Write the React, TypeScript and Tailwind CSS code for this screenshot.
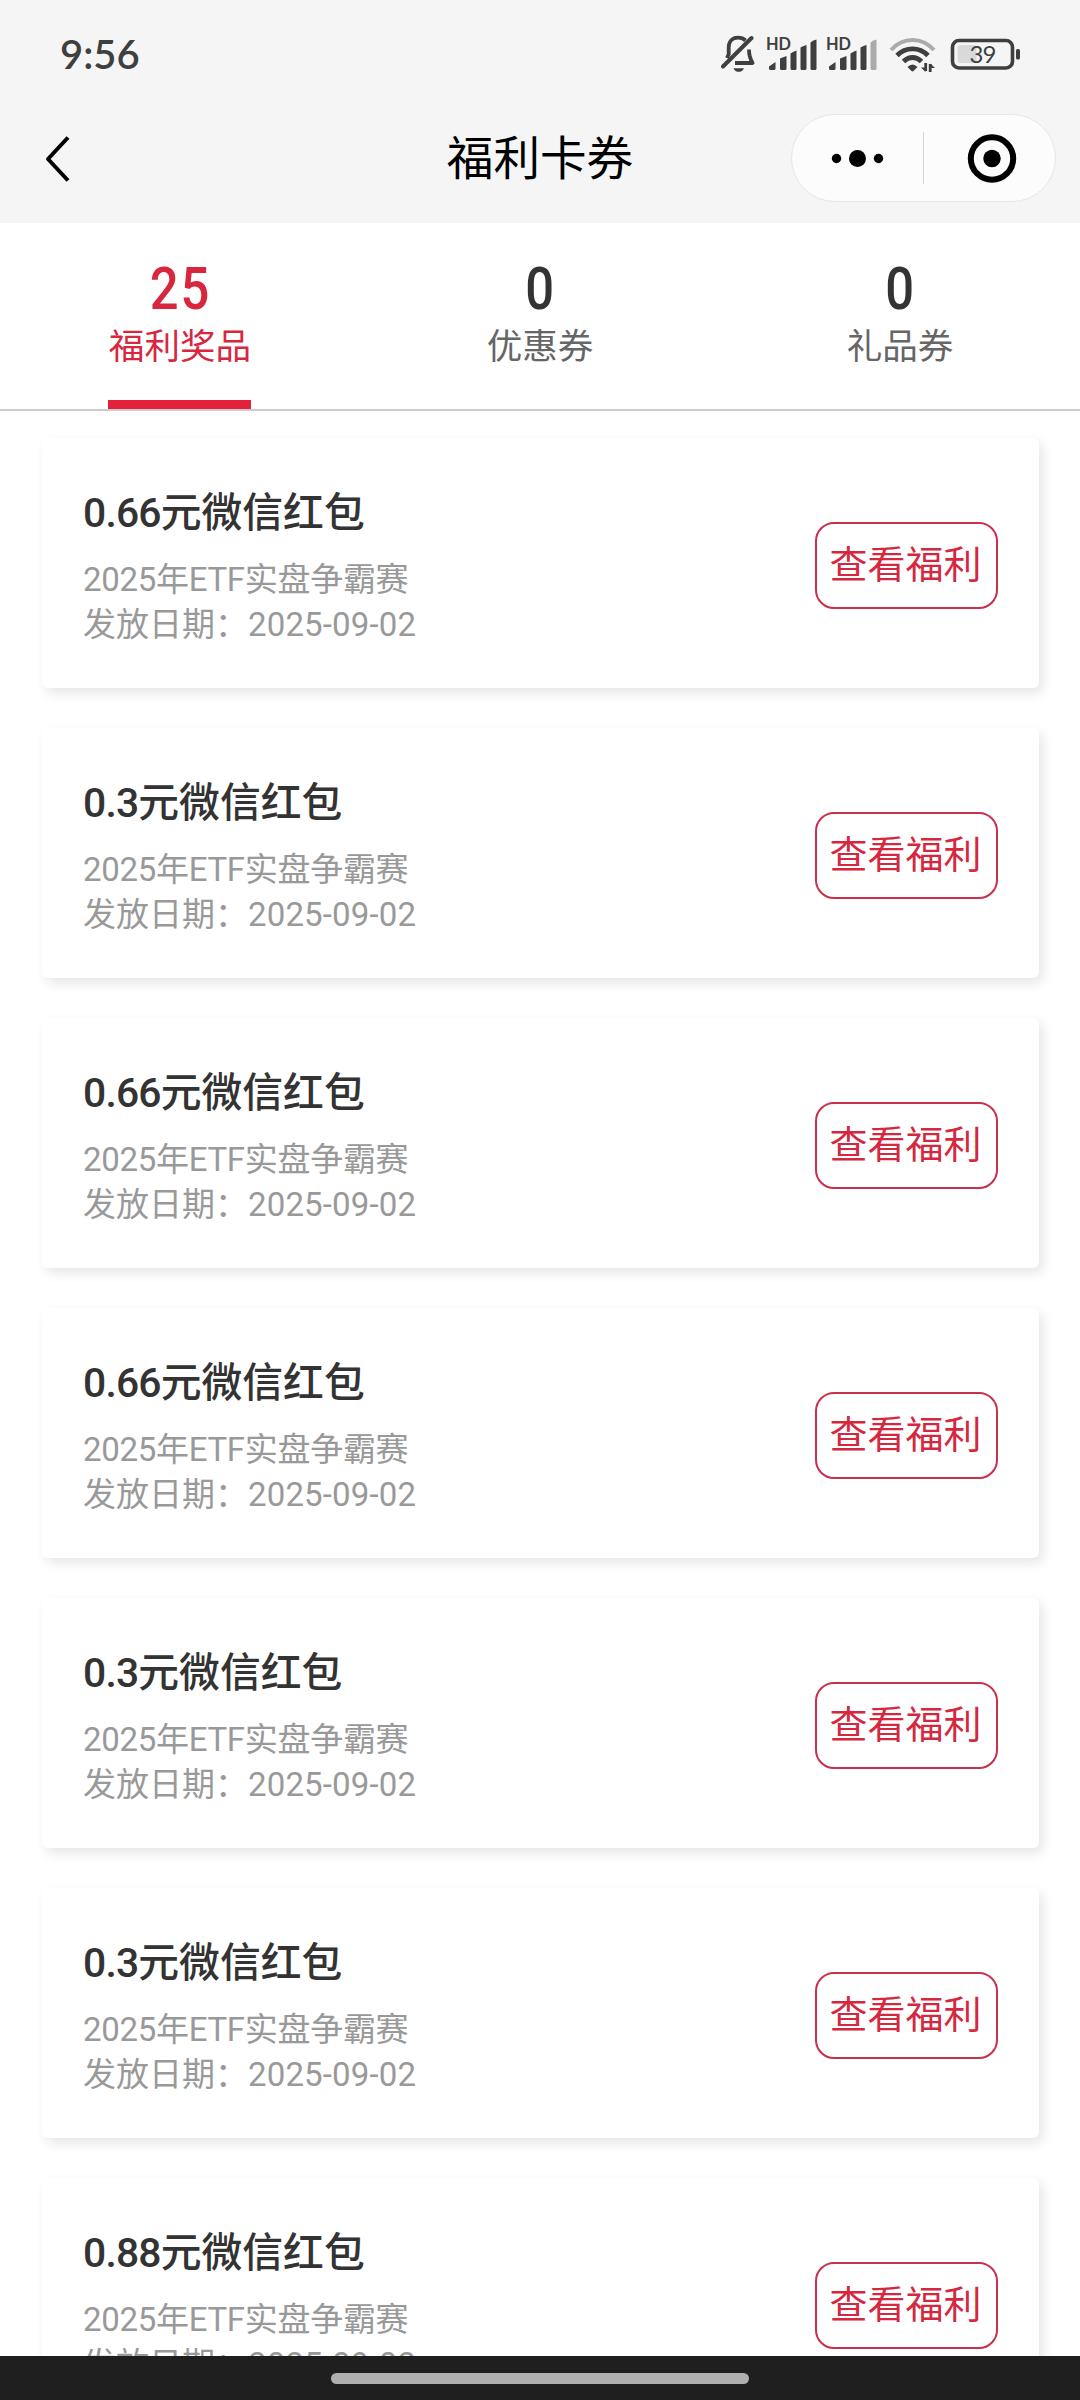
import React, { useState } from "react";

interface Coupon {
  id: number;
  amount: string;
  activity: string;
  date: string;
}

interface Tab {
  key: string;
  label: string;
  count: number;
}

const tabs: Tab[] = [
  { key: "prize", label: "福利奖品", count: 25 },
  { key: "discount", label: "优惠券", count: 0 },
  { key: "gift", label: "礼品券", count: 0 },
];

const amounts = ["0.66", "0.3", "0.66", "0.66", "0.3", "0.3", "0.88"];

const coupons: Coupon[] = amounts.map((amount, index) => ({
  id: index,
  amount,
  activity: "2025年ETF实盘争霸赛",
  date: "2025-09-02",
}));

const MuteIcon = () => (
  <svg width="36" height="40" viewBox="0 0 36 40" fill="none">
    <path
      d="M24.5 5.5C22.5 3.6 20 2.7 17 2.7c-6 0-9.3 4.3-9.3 9.8v6.8L6 23M28 14.5c0 6 .8 9 3.6 13.5H14"
      stroke="#3f3f3f"
      strokeWidth="3.8"
      strokeLinejoin="round"
    />
    <path d="M2 31.5 30.5 3" stroke="#3f3f3f" strokeWidth="4" strokeLinecap="round" />
    <path d="M12.5 33.2h10.5c-1.2 2.6-3 3.6-5.3 3.6s-4-1-5.2-3.6Z" fill="#3f3f3f" />
  </svg>
);

const SignalIcon = ({ weak }: { weak?: boolean }) => (
  <svg width="50" height="34" viewBox="0 0 50 34" fill="#3f3f3f" className="overflow-visible">
    <text
      x="-1"
      y="12"
      fontSize="16.5"
      fontWeight="700"
      fontFamily="Lato, sans-serif"
      textLength="25"
      lengthAdjust="spacingAndGlyphs"
    >
      HD
    </text>
    <path d="M2 28.5 8.5 24v6.5a1.5 1.5 0 0 1-1.5 1.5H3.5A1.5 1.5 0 0 1 2 30.5Z" />
    <path d="M13 20.5 19.5 18v12.5a1.5 1.5 0 0 1-1.5 1.5h-3.5a1.5 1.5 0 0 1-1.5-1.5Z" />
    <path d="M23.5 15.5q3-2 6-3v18a1.5 1.5 0 0 1-1.5 1.5h-3a1.5 1.5 0 0 1-1.5-1.5Z" />
    <path d="M33.5 9.5q3-2 6-2.5v23.5a1.5 1.5 0 0 1-1.5 1.5h-3a1.5 1.5 0 0 1-1.5-1.5Z" />
    <path
      d="M43.5 4.5q3-2.5 6-3v29a1.5 1.5 0 0 1-1.5 1.5h-3a1.5 1.5 0 0 1-1.5-1.5Z"
      fill={weak ? "#ababab" : "#3f3f3f"}
    />
  </svg>
);

const WifiIcon = () => (
  <svg width="48" height="36" viewBox="0 0 48 36" fill="none">
    <path d="M2 13Q11 3 23.5 3T45 13" stroke="#ababab" strokeWidth="4" />
    <path d="M8 18.5Q14.5 11.8 23.5 11.8T39 18.5" stroke="#3f3f3f" strokeWidth="4.8" />
    <path d="M14.5 24.5Q18.5 20.5 23.5 20.5T32.5 24.5" stroke="#3f3f3f" strokeWidth="4.8" />
    <path d="M18.5 30q5-5 10 0l-4 4q-1 .8-2 0Z" fill="#3f3f3f" />
    <path d="M36.7 26v8M41.2 35v-8" stroke="#3f3f3f" strokeWidth="2.8" />
    <path d="M32 30.5h4.5v4.5ZM41.5 26.5v4.5h4.5Z" fill="#3f3f3f" />
  </svg>
);

const BatteryIcon = () => (
  <svg width="70" height="32" viewBox="0 0 70 32" fill="none" className="overflow-visible">
    <rect x="2.5" y="2.5" width="60" height="27.5" rx="6.5" stroke="#3f3f3f" strokeWidth="3.6" />
    <rect x="7.5" y="7" width="19" height="18" rx="3" fill="#d9d9d9" />
    <rect x="66" y="11" width="4" height="10.5" rx="1.5" fill="#3f3f3f" />
    <text
      x="33"
      y="25"
      textAnchor="middle"
      fontSize="24"
      fontFamily="Lato, sans-serif"
      fill="#3f3f3f"
      textLength="27"
    >
      39
    </text>
  </svg>
);

const StatusBar = () => (
  <div className="flex h-[94px] justify-between px-[60px]">
    <span className="mt-[29px] font-[Lato,sans-serif] text-[40px] leading-[50px] font-semibold text-[#3f3f3f]">
      9:56
    </span>
    <div className="flex items-start">
      <div className="mt-[35px]">
        <MuteIcon />
      </div>
      <div className="mt-[38px] ml-[10px]">
        <SignalIcon />
      </div>
      <div className="mt-[38px] ml-[10px]">
        <SignalIcon weak />
      </div>
      <div className="mt-[37px] ml-[12px]">
        <WifiIcon />
      </div>
      <div className="mt-[38px] ml-[13px]">
        <BatteryIcon />
      </div>
    </div>
  </div>
);

const NavBar = () => (
  <div className="grid h-[129px] grid-cols-3">
    <button type="button" aria-label="返回" className="flex h-[129px] items-center pl-[44px]">
      <svg width="28" height="48" viewBox="0 0 28 48" fill="none">
        <path d="M24 2.5 4 24l20 21.5" stroke="#000" strokeWidth="4" strokeLinejoin="round" />
      </svg>
    </button>
    <h1 className="pt-[30px] text-center text-[46.6px] leading-[70px] font-normal text-black">
      福利卡券
    </h1>
    <div className="flex justify-end pt-[20px] pr-[24px]">
      <div className="flex h-[88px] w-[265px] items-center rounded-full border border-[#e6e6e6] bg-[#fcfcfc]">
        <svg width="131" height="52" viewBox="0 0 131 52">
          <circle cx="44.5" cy="26.5" r="4.7" />
          <circle cx="65.5" cy="26.5" r="8.5" />
          <circle cx="86.5" cy="26.5" r="4.7" />
        </svg>
        <div className="h-[52px] w-px bg-[#d4d4d4]" />
        <svg width="131" height="52" viewBox="0 0 131 52">
          <circle cx="68" cy="26.5" r="21.2" fill="none" stroke="#000" strokeWidth="6" />
          <circle cx="68" cy="26.5" r="8.7" />
        </svg>
      </div>
    </div>
  </div>
);

interface CouponCardProps {
  coupon: Coupon;
}

const CouponCard: React.FC<CouponCardProps> = ({ coupon }) => {
  return (
    <div className="flex h-[250px] shrink-0 justify-between rounded-[6px] bg-white px-[41px] shadow-[4px_5px_12px_rgba(0,0,0,0.1)]">
      <div className="pt-[45px]">
        <h2 className="text-[40.8px] leading-[60px] font-medium text-[#333]">
          <span className="tracking-[-0.8px]">{coupon.amount}</span>
          元微信红包
        </h2>
        <div className="mt-[14px] text-[33px] leading-[45px] text-[#999]">
          <p className="tracking-[-0.3px]">{coupon.activity}</p>
          <p>
            发放日期：<span className="tracking-[0.15px]">{coupon.date}</span>
          </p>
        </div>
      </div>
      <button
        type="button"
        className="mt-[84px] h-[87px] w-[183px] rounded-[19px] border-2 border-[#c8304b] pr-[2px] text-[38px] text-[#d5283f]"
      >
        查看福利
      </button>
    </div>
  );
};

const App: React.FC = () => {
  const [activeTab, setActiveTab] = useState("prize");

  return (
    <div className="flex h-[2400px] w-[1080px] flex-col overflow-hidden bg-white font-[Roboto,'Noto_Sans_CJK_SC',sans-serif]">
      <header className="h-[223px] shrink-0 bg-[#f5f5f5]">
        <StatusBar />
        <NavBar />
      </header>

      <nav className="grid h-[188px] shrink-0 grid-cols-3 border-b-2 border-[#ccc]">
        {tabs.map((tab) => {
          const active = tab.key === activeTab;
          return (
            <button
              key={tab.key}
              type="button"
              onClick={() => setActiveTab(tab.key)}
              className={`flex flex-col items-center pt-[36px] ${
                active ? "text-[#d9263f]" : "text-[#666]"
              }`}
            >
              <span
                className={`scale-x-[0.86] pl-[2px] text-[59px] leading-[60px] font-medium tracking-[2px] ${
                  active ? "" : "text-[#333]"
                }`}
              >
                {tab.count}
              </span>
              <span className="text-[35.6px] leading-[56px]">{tab.label}</span>
              {active && <span className="mt-auto mr-[1px] h-[9px] w-[143px] bg-[#e3213a]" />}
            </button>
          );
        })}
      </nav>

      <main className="flex min-h-0 flex-1 flex-col gap-[40px] overflow-hidden pt-[27px] pr-[41px] pl-[42px]">
        {coupons.map((coupon) => (
          <CouponCard key={coupon.id} coupon={coupon} />
        ))}
      </main>

      <footer className="flex h-[44px] shrink-0 justify-center bg-[#1f1f1f] pt-[17px]">
        <div className="h-[11px] w-[418px] rounded-full bg-[#afafaf]" />
      </footer>
    </div>
  );
};

export default App;
